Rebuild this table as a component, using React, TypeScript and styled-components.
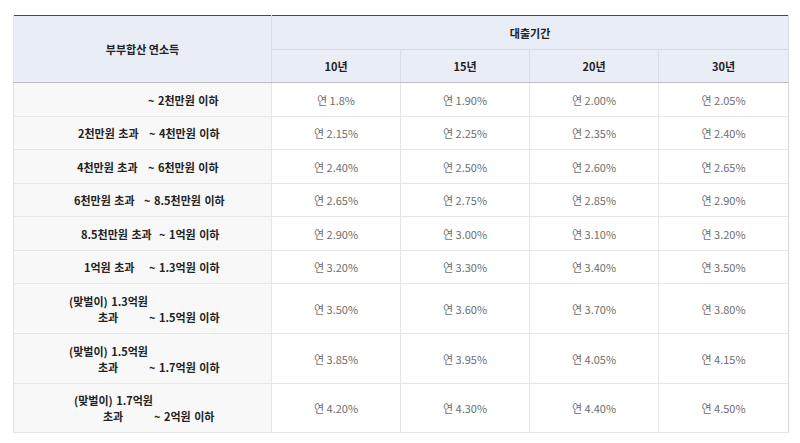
import React from 'react';
import styled, { createGlobalStyle } from 'styled-components';

const GlobalStyle = createGlobalStyle`
  body {
    margin: 0;
    background: #fff;
    font-family: 'Noto Sans CJK KR', 'Noto Sans', sans-serif;
  }
`;

const Wrap = styled.div`
  padding: 15px 12px 0 13px;
`;

const Table = styled.table`
  width: 775px;
  border-collapse: collapse;
  table-layout: fixed;
  border-top: 1px solid #4a4a4a;
  border-bottom: 1px solid #c8c8c8;
  font-size: 11px;
`;

const HeadRow = styled.tr<{ h: number }>`
  height: ${(p) => p.h}px;
`;

const Th = styled.th<{ bottom?: boolean }>`
  background: #e9edf5;
  color: #222;
  font-weight: 700;
  text-align: center;
  padding: 0;
  border-left: 1px solid #d9dde4;
  border-right: 1px solid #d9dde4;
  border-bottom: 1px solid ${(p) => (p.bottom ? '#bdbdbd' : '#d5d9e0')};

  &:first-child {
    border-left: 1px solid #e4e6ea;
  }
`;

const Row = styled.tr<{ h: number }>`
  height: ${(p) => p.h}px;
`;

const LabelCell = styled.td`
  background: #f8f8f8;
  color: #222;
  font-weight: 700;
  padding: 0;
  text-align: left;
  border: 1px solid #e6e6e6;
  border-left-color: #e4e4e4;
  line-height: 16px;
  word-spacing: 1px;
`;

const Line = styled.div<{ indent: number }>`
  padding-left: ${(p) => p.indent}px;
  white-space: nowrap;
`;

const From = styled.span<{ w: number }>`
  display: inline-block;
  width: ${(p) => p.w}px;
`;

const Cell = styled.td`
  color: #6e6e6e;
  text-align: center;
  padding: 0;
  border: 1px solid #e6e6e6;
  &:last-child {
    border-right-color: #d8d8d8;
  }
`;

type LabelLine = { indent: number; from?: string; fromW?: number; to: string };
type RowData = { h: number; lines: LabelLine[]; rates: string[] };

const rows: RowData[] = [
  { h: 34, lines: [{ indent: 134, to: '~ 2천만원 이하' }], rates: ['1.8%', '1.90%', '2.00%', '2.05%'] },
  { h: 33, lines: [{ indent: 64, from: '2천만원 초과', fromW: 71, to: '~ 4천만원 이하' }], rates: ['2.15%', '2.25%', '2.35%', '2.40%'] },
  { h: 34, lines: [{ indent: 63, from: '4천만원 초과', fromW: 71, to: '~ 6천만원 이하' }], rates: ['2.40%', '2.50%', '2.60%', '2.65%'] },
  { h: 33, lines: [{ indent: 60, from: '6천만원 초과', fromW: 70, to: '~ 8.5천만원 이하' }], rates: ['2.65%', '2.75%', '2.85%', '2.90%'] },
  { h: 34, lines: [{ indent: 67, from: '8.5천만원 초과', fromW: 78, to: '~ 1억원 이하' }], rates: ['2.90%', '3.00%', '3.10%', '3.20%'] },
  { h: 33, lines: [{ indent: 70, from: '1억원 초과', fromW: 65, to: '~ 1.3억원 이하' }], rates: ['3.20%', '3.30%', '3.40%', '3.50%'] },
  {
    h: 50,
    lines: [
      { indent: 55, to: '(맞벌이) 1.3억원' },
      { indent: 84, from: '초과', fromW: 51, to: '~ 1.5억원 이하' },
    ],
    rates: ['3.50%', '3.60%', '3.70%', '3.80%'],
  },
  {
    h: 50,
    lines: [
      { indent: 55, to: '(맞벌이) 1.5억원' },
      { indent: 84, from: '초과', fromW: 51, to: '~ 1.7억원 이하' },
    ],
    rates: ['3.85%', '3.95%', '4.05%', '4.15%'],
  },
  {
    h: 49,
    lines: [
      { indent: 60, to: '(맞벌이) 1.7억원' },
      { indent: 89, from: '초과', fromW: 51, to: '~ 2억원 이하' },
    ],
    rates: ['4.20%', '4.30%', '4.40%', '4.50%'],
  },
];

const terms = ['10년', '15년', '20년', '30년'];

export default function App() {
  return (
    <Wrap>
      <GlobalStyle />
      <Table>
        <colgroup>
          <col style={{ width: 258 }} />
          <col style={{ width: 129 }} />
          <col style={{ width: 129 }} />
          <col style={{ width: 129 }} />
          <col style={{ width: 130 }} />
        </colgroup>
        <thead>
          <HeadRow h={34}>
            <Th rowSpan={2} bottom>
              부부합산 연소득
            </Th>
            <Th colSpan={4}>대출기간</Th>
          </HeadRow>
          <HeadRow h={33}>
            {terms.map((t) => (
              <Th key={t} bottom>
                {t}
              </Th>
            ))}
          </HeadRow>
        </thead>
        <tbody>
          {rows.map((r, i) => (
            <Row key={i} h={r.h}>
              <LabelCell>
                {r.lines.map((l, j) => (
                  <Line key={j} indent={l.indent}>
                    {l.from && <From w={l.fromW ?? 0}>{l.from}</From>}
                    {l.to}
                  </Line>
                ))}
              </LabelCell>
              {r.rates.map((rate, k) => (
                <Cell key={k}>연 {rate}</Cell>
              ))}
            </Row>
          ))}
        </tbody>
      </Table>
    </Wrap>
  );
}
